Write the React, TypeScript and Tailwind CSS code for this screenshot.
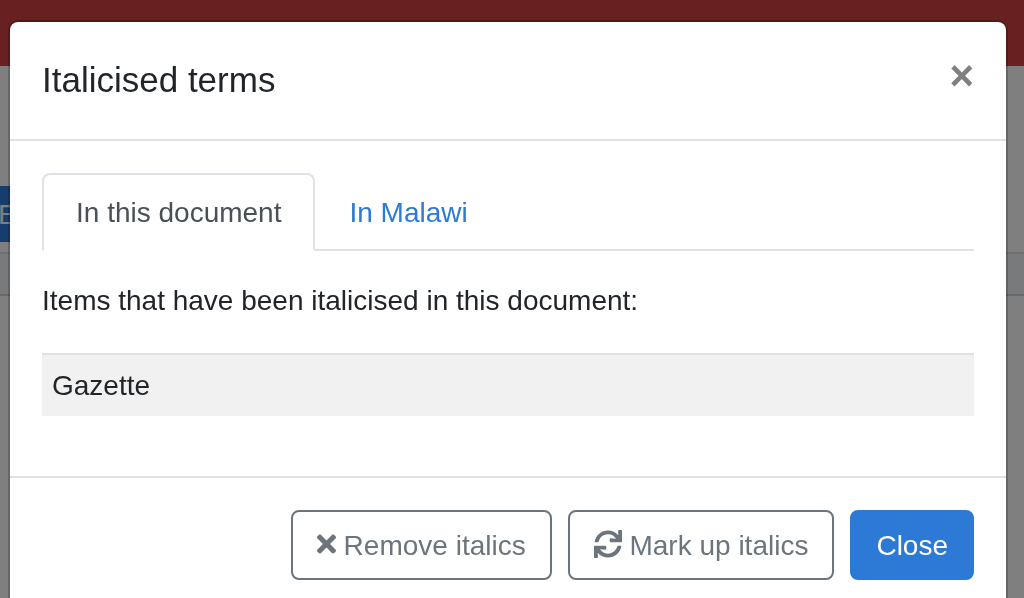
import React, { useState } from 'react';
import { FaSync, FaTimes } from 'react-icons/fa';

const button = 'rounded-lg border-2 px-6 pt-[13px] pb-[11px]';
const outlineButton = `${button} border-[#6c757d] text-[#6c757d]`;

const tabBase = '-mb-0.5 rounded-t-lg border-2 px-8 pt-[17px] pb-[15px]';
const activeTab = `${tabBase} border-[#dee2e6] border-b-white bg-white text-[#495057]`;
const idleTab = `${tabBase} border-transparent text-[#2c7ad6]`;

function Page() {
  return (
    <div className="h-screen overflow-hidden bg-white" aria-hidden="true">
      <div className="h-[66px] bg-[#d04040]" />
      <div className="flex h-[186px] items-end pb-[10px]">
        <div className="-ml-0.5 flex h-14 w-28 items-center bg-[#2c7ad6] pt-0.5 text-white">E</div>
      </div>
      <div className="h-11 border-y-2 border-t-[#dee2e6] border-b-[#ced4da] bg-[#f1f5f7]" />
    </div>
  );
}

export default function App() {
  const [tab, setTab] = useState<'document' | 'place'>('document');

  return (
    <div className="font-['Liberation_Sans',Arial,sans-serif] text-[28px] leading-[42px] text-[#212529]">
      <Page />
      <div className="fixed inset-0 overflow-hidden bg-black/50 pt-5 pr-4 pl-2">
        <div
          role="dialog"
          aria-labelledby="dialog-title"
          className="rounded-[10px] border-2 border-black/20 bg-white bg-clip-padding"
        >
          <header className="flex items-start justify-between border-b-2 border-[#dee2e6] px-8 pt-8 pb-[34px]">
            <h5 id="dialog-title" className="text-[35px] leading-[51px]">
              Italicised terms
            </h5>
            <button
              type="button"
              aria-label="Close dialog"
              className="text-[42px] leading-[44px] font-bold text-[#808080]"
            >
              ×
            </button>
          </header>

          <div className="px-8 pt-8 pb-[60px]">
            <div role="tablist" className="flex border-b-2 border-[#dee2e6]">
              <button
                type="button"
                role="tab"
                aria-selected={tab === 'document'}
                onClick={() => setTab('document')}
                className={tab === 'document' ? activeTab : idleTab}
              >
                In this document
              </button>
              <button
                type="button"
                role="tab"
                aria-selected={tab === 'place'}
                onClick={() => setTab('place')}
                className={tab === 'place' ? activeTab : idleTab}
              >
                In Malawi
              </button>
            </div>
            <p className="mt-[29px] mb-[31px]">Items that have been italicised in this document:</p>
            <table className="w-full border-separate border-spacing-0">
              <tbody>
                <tr>
                  <td className="border-t-2 border-[#dee2e6] bg-[#f1f1f1] px-[10px] pt-[10px] pb-[9px]">Gazette</td>
                </tr>
              </tbody>
            </table>
          </div>

          <footer className="flex justify-end gap-4 border-t-2 border-[#dee2e6] p-8">
            <button type="button" className={outlineButton}>
              <FaTimes className="inline w-[19px] align-[-3px]" /> Remove italics
            </button>
            <button type="button" className={outlineButton}>
              <FaSync className="inline align-[-3px]" /> Mark up italics
            </button>
            <button type="button" className={`${button} border-[#2c7ad6] bg-[#2c7ad6] text-white`}>
              Close
            </button>
          </footer>
        </div>
      </div>
    </div>
  );
}
